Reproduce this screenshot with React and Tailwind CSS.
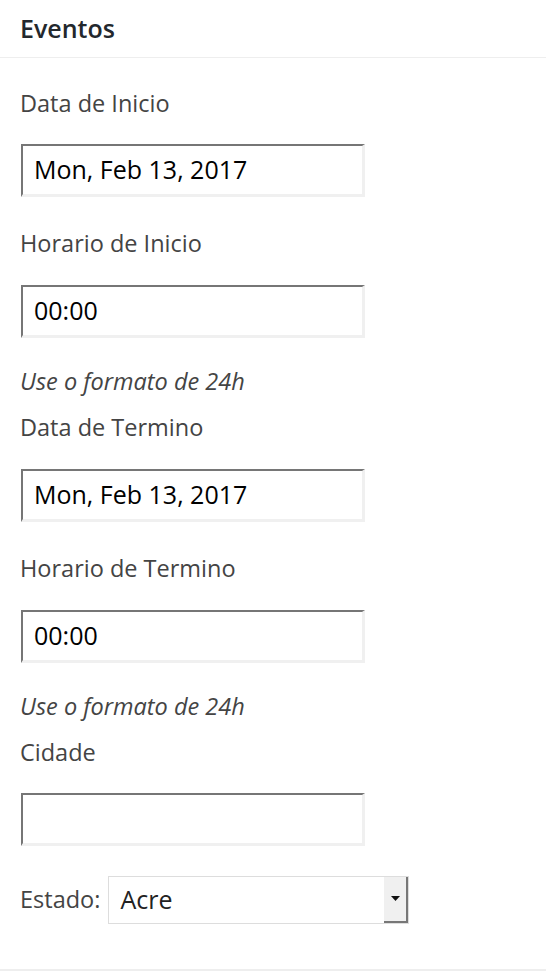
import { useState } from "react";

const font = { fontFamily: '"Open Sans", "Noto Sans", sans-serif' };

function Label({ children, className = "" }) {
  return (
    <div className={`text-[23.5px] leading-[30px] text-[#444] ${className}`}>
      {children}
    </div>
  );
}

function Field({ value, className = "" }) {
  return (
    <div
      className={`ml-[1px] w-[344px] h-[53px] border-t-2 border-l-2 border-r-[3px] border-b-[3px] border-t-[#767676] border-l-[#767676] border-r-[#f0f0f0] border-b-[#f0f0f0] bg-white flex items-center px-[11px] text-[25px] text-black ${className}`}
    >
      {value}
    </div>
  );
}

function Hint({ className = "" }) {
  return (
    <div className={`text-[23.5px] leading-[30px] italic text-[#444] ${className}`}>
      Use o formato de 24h
    </div>
  );
}

export default function App() {
  const [estado] = useState("Acre");

  return (
    <div className="w-[546px] min-h-[972px] bg-white" style={font}>
      <div className="border-b-2 border-[#eee]">
        {/* Header */}
        <div className="h-[58px] border-b border-[#eee] px-[20px] flex items-center">
          <h2 className="text-[25px] font-semibold text-[#23282d]">Eventos</h2>
        </div>

        <div className="px-[20px] pb-[45px]">
          <Label className="mt-[30px]">Data de Inicio</Label>
          <Field value="Mon, Feb 13, 2017" className="mt-[26px]" />

          <Label className="mt-[31px]">Horario de Inicio</Label>
          <Field value="00:00" className="mt-[27px]" />
          <Hint className="mt-[28px]" />

          <Label className="mt-[16px]">Data de Termino</Label>
          <Field value="Mon, Feb 13, 2017" className="mt-[27px]" />

          <Label className="mt-[31px]">Horario de Termino</Label>
          <Field value="00:00" className="mt-[27px]" />
          <Hint className="mt-[28px]" />

          <Label className="mt-[16px]">Cidade</Label>
          <Field value="" className="mt-[26px]" />

          {/* Estado */}
          <div className="mt-[30px] flex items-center gap-[8px]">
            <span className="text-[23.5px] text-[#444]">Estado:</span>
            <div className="w-[301px] h-[48px] border border-[#ddd] flex">
              <div className="flex-1 flex items-center px-[11px] text-[25px] text-[#222]">
                {estado}
              </div>
              <div className="w-[24px] bg-[#f0f0f0] border-r-2 border-b-2 border-[#777] flex items-center justify-center">
                <svg width="9" height="6" viewBox="0 0 9 6">
                  <path d="M0 0h9L4.5 5z" fill="#111" />
                </svg>
              </div>
            </div>
          </div>
        </div>
      </div>
    </div>
  );
}
